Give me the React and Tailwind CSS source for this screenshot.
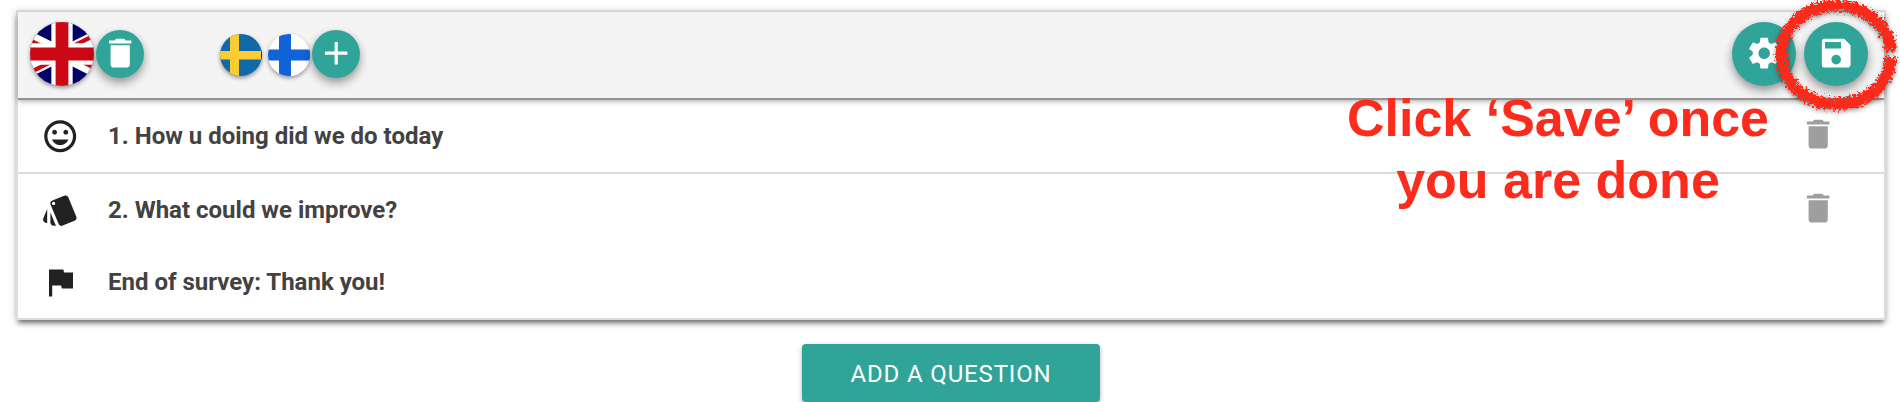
import clsx from 'clsx';
import { MdAdd, MdDelete, MdFlag, MdMood, MdSave, MdSettings, MdStyle } from 'react-icons/md';

const questions = [
  { icon: MdMood, label: '1. How u doing did we do today', removable: true },
  { icon: MdStyle, label: '2. What could we improve?', removable: true },
  { icon: MdFlag, label: 'End of survey: Thank you!', removable: false },
];

function RoundButton({ icon: Icon, label, large, className }) {
  return (
    <button
      aria-label={label}
      className={clsx(
        'flex shrink-0 items-center justify-center rounded-full bg-[#30a499] pb-0.5 text-white shadow-[0_4px_8px_rgba(0,0,0,0.3),0_6px_12px_rgba(0,0,0,0.12)]',
        large ? 'size-16' : 'size-12',
        className
      )}
    >
      <Icon className="size-[38.4px]" />
    </button>
  );
}

function Flag({ viewBox, className, children }) {
  return (
    <svg
      viewBox={viewBox}
      className={clsx('shrink-0 rounded-full shadow-[0_2px_4px_rgba(0,0,0,0.4)]', className)}
    >
      {children}
    </svg>
  );
}

function UnitedKingdom() {
  return (
    <Flag viewBox="15 0 30 30" className="size-16">
      <clipPath id="saltire">
        <path d="M30 15h30v15zM30 15v15H0zM30 15H0V0zM30 15V0h30z" />
      </clipPath>
      <path d="M0 0h60v30H0z" fill="#000066" />
      <path d="M0 0l60 30M60 0L0 30" stroke="#fff" strokeWidth="6" />
      <path d="M0 0l60 30M60 0L0 30" clipPath="url(#saltire)" stroke="#cc0814" strokeWidth="4" />
      <path d="M30 0v30M0 15h60" stroke="#fff" strokeWidth="10" />
      <path d="M30 0v30M0 15h60" stroke="#cc0814" strokeWidth="6" />
    </Flag>
  );
}

function Sweden() {
  return (
    <Flag viewBox="0 0 42 42" className="size-[42px]">
      <path d="M0 0h42v42H0z" fill="#116aa8" />
      <path d="M10 0h9v42h-9zM0 17h42v8.4H0z" fill="#fecb30" />
      <path d="M41 17h1v8.4h-1z" fill="#0a1f5c" />
    </Flag>
  );
}

function Finland() {
  return (
    <Flag viewBox="0 0 42 42" className="size-[42px]">
      <path d="M0 0h42v42H0z" fill="#fff" />
      <path d="M11 0h12v42H11zM0 15.5h42v11H0z" fill="#1064d8" />
      <path d="M41 17h1v8h-1z" fill="#d8203a" />
    </Flag>
  );
}

// hand drawn marker ring around the save button
function MarkerRing() {
  return (
    <svg
      viewBox="0 0 140 130"
      className="pointer-events-none absolute -top-[33px] -left-[38px] h-[130px] w-[140px] max-w-none drop-shadow-[0_2px_2px_rgba(0,0,0,0.4)]"
    >
      <filter id="chalk" x="-10%" y="-10%" width="120%" height="120%">
        <feTurbulence type="fractalNoise" baseFrequency="0.4" numOctaves="3" seed="4" />
        <feDisplacementMap in="SourceGraphic" scale="12" xChannelSelector="R" yChannelSelector="G" />
      </filter>
      <path
        d="M125 68C122 98 99 115 70 115C40 115 15.5 94 15.5 65C15.5 37 40 16.5 70 16.5C99 16.5 123 37 125 62"
        fill="none"
        stroke="#fd2b1c"
        strokeWidth="11.5"
        filter="url(#chalk)"
      />
    </svg>
  );
}

export default function App() {
  return (
    <div className="relative h-[402px] overflow-hidden bg-white px-4 pt-2.5 pr-3.5 font-[Roboto,sans-serif]">
      <section className="h-[310px] border-2 border-[#dcdcdc] shadow-[0_5px_5px_-2px_rgba(0,0,0,0.5),0_1px_8px_rgba(0,0,0,0.16)]">
        <header className="relative flex h-[86px] items-center bg-[#f4f4f4] pr-4 pb-0.5 pl-3 shadow-[0_2px_0_#929292,0_3px_6px_rgba(0,0,0,0.35)]">
          <UnitedKingdom />
          <RoundButton icon={MdDelete} label="Delete language" className="ml-0.5" />
          <div className="ml-[76px] flex items-center gap-1.5">
            <div className="flex gap-1.5 pt-0.5">
              <Sweden />
              <Finland />
            </div>
            <RoundButton icon={MdAdd} label="Add language" className="-ml-1" />
          </div>
          <div className="ml-auto flex gap-2">
            <RoundButton icon={MdSettings} label="Settings" large />
            <div className="relative">
              <RoundButton icon={MdSave} label="Save" large />
              <MarkerRing />
            </div>
          </div>
        </header>

        <ul className="text-2xl font-bold text-[#424242]">
          {questions.map(({ icon: Icon, label, removable }, i) => (
            <li
              key={label}
              className={clsx(
                'flex items-center pr-[47px] pl-[23px]',
                i === 0 ? 'h-[76px] border-b-2 border-[#dcdcdc] pt-0.5' : 'h-[72px]'
              )}
            >
              <Icon className="size-[38.4px] text-[#212121]" />
              <span className="ml-[28.6px]">{label}</span>
              {removable && <MdDelete className="mb-[3px] ml-auto size-[38.4px] text-[#9e9e9e]" />}
            </li>
          ))}
        </ul>
      </section>

      <button className="mx-auto mt-6 block h-[58px] w-[298px] rounded bg-[#30a499] pt-0.5 text-2xl tracking-[0.85px] text-white shadow-[0_2px_5px_rgba(0,0,0,0.3)]">
        ADD A QUESTION
      </button>

      <p className="absolute top-[87px] left-[1308px] w-[500px] text-center font-['Liberation_Sans',sans-serif] text-[52px] leading-[62px] font-bold text-[#fd2b1c]">
        Click ‘Save’ once
        <br />
        you are done
      </p>
    </div>
  );
}
